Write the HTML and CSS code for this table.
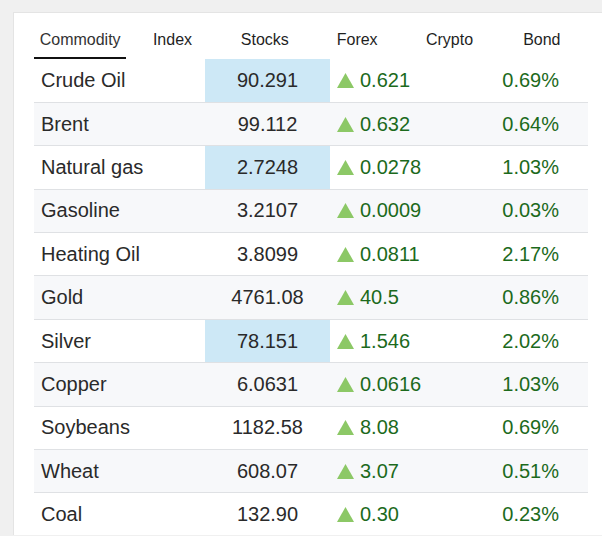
FILE: index.html
```html
<!DOCTYPE html>
<html>
<head>
<meta charset="utf-8">
<link rel="stylesheet" href="styles.css">
</head>
<body>
<div class="panel">
  <div class="tabs">
    <div class="tab active">Commodity</div>
    <div class="tab">Index</div>
    <div class="tab">Stocks</div>
    <div class="tab">Forex</div>
    <div class="tab">Crypto</div>
    <div class="tab">Bond</div>
  </div>
  <table class="quotes">
    <colgroup><col class="c-name"><col class="c-price"><col class="c-chg"><col class="c-pct"></colgroup>
    <tbody>
      <tr><td class="name">Crude Oil</td><td class="price hl">90.291</td><td class="chg"><svg class="up" viewBox="0 0 17 15"><polygon points="8.5,0 17,15 0,15"/></svg>0.621</td><td class="pct">0.69%</td></tr>
      <tr><td class="name">Brent</td><td class="price">99.112</td><td class="chg"><svg class="up" viewBox="0 0 17 15"><polygon points="8.5,0 17,15 0,15"/></svg>0.632</td><td class="pct">0.64%</td></tr>
      <tr><td class="name">Natural gas</td><td class="price hl">2.7248</td><td class="chg"><svg class="up" viewBox="0 0 17 15"><polygon points="8.5,0 17,15 0,15"/></svg>0.0278</td><td class="pct">1.03%</td></tr>
      <tr><td class="name">Gasoline</td><td class="price">3.2107</td><td class="chg"><svg class="up" viewBox="0 0 17 15"><polygon points="8.5,0 17,15 0,15"/></svg>0.0009</td><td class="pct">0.03%</td></tr>
      <tr><td class="name">Heating Oil</td><td class="price">3.8099</td><td class="chg"><svg class="up" viewBox="0 0 17 15"><polygon points="8.5,0 17,15 0,15"/></svg>0.0811</td><td class="pct">2.17%</td></tr>
      <tr><td class="name">Gold</td><td class="price">4761.08</td><td class="chg"><svg class="up" viewBox="0 0 17 15"><polygon points="8.5,0 17,15 0,15"/></svg>40.5</td><td class="pct">0.86%</td></tr>
      <tr><td class="name">Silver</td><td class="price hl">78.151</td><td class="chg"><svg class="up" viewBox="0 0 17 15"><polygon points="8.5,0 17,15 0,15"/></svg>1.546</td><td class="pct">2.02%</td></tr>
      <tr><td class="name">Copper</td><td class="price">6.0631</td><td class="chg"><svg class="up" viewBox="0 0 17 15"><polygon points="8.5,0 17,15 0,15"/></svg>0.0616</td><td class="pct">1.03%</td></tr>
      <tr><td class="name">Soybeans</td><td class="price">1182.58</td><td class="chg"><svg class="up" viewBox="0 0 17 15"><polygon points="8.5,0 17,15 0,15"/></svg>8.08</td><td class="pct">0.69%</td></tr>
      <tr><td class="name">Wheat</td><td class="price">608.07</td><td class="chg"><svg class="up" viewBox="0 0 17 15"><polygon points="8.5,0 17,15 0,15"/></svg>3.07</td><td class="pct">0.51%</td></tr>
      <tr><td class="name">Coal</td><td class="price">132.90</td><td class="chg"><svg class="up" viewBox="0 0 17 15"><polygon points="8.5,0 17,15 0,15"/></svg>0.30</td><td class="pct">0.23%</td></tr>
    </tbody>
  </table>
</div>
</body>
</html>
```
FILE: styles.css
```css
html, body {
  margin: 0;
  padding: 0;
  background: #f0f0f0;
  overflow: hidden;
  height: 536px;
}
body {
  font-family: "Liberation Sans", Arial, sans-serif;
  color: #222;
}
.panel {
  margin: 12px 0 0 13px;
  background: #fff;
  border-top: 1px solid #e4e4e4;
  border-left: 1px solid #e4e4e4;
  padding: 0 0 0 20px;
  height: 523px;
  box-sizing: border-box;
  overflow: hidden;
}
.tabs {
  display: grid;
  grid-template-columns: repeat(6, 1fr);
  width: 554px;
}
.tab {
  text-align: center;
  font-size: 16px;
  line-height: 19px;
  padding: 17px 0 8px;
  border-bottom: 2px solid transparent;
  color: #1f1f1f;
}
.tab.active {
  border-bottom-color: #111;
  color: #333;
}
.quotes {
  width: 554px;
  table-layout: fixed;
  border-collapse: collapse;
  font-size: 20px;
}
.c-name { width: 171px; }
.c-price { width: 125px; }
.c-chg { width: 130px; }
.quotes tr {
  height: 43.4px;
}
.quotes tr:nth-child(even) td {
  background: #f7f8fa;
}
.quotes td {
  padding: 0;
  line-height: 23px;
  border-bottom: 1px solid #dfe1e4;
  white-space: nowrap;
  vertical-align: middle;
}
.name {
  padding-left: 7px !important;
  color: #2a2a2a;
}
.price {
  text-align: center;
  color: #2a2a2a;
}
.quotes tr td.hl {
  background: #cde8f6;
}
.chg {
  padding-left: 7px !important;
  color: #1c6a1c;
}
.up {
  width: 17px;
  height: 15px;
  fill: #8cc866;
  margin-right: 6px;
  vertical-align: -1px;
}
.pct {
  text-align: right;
  padding-right: 29px !important;
  color: #1c6a1c;
}
```
